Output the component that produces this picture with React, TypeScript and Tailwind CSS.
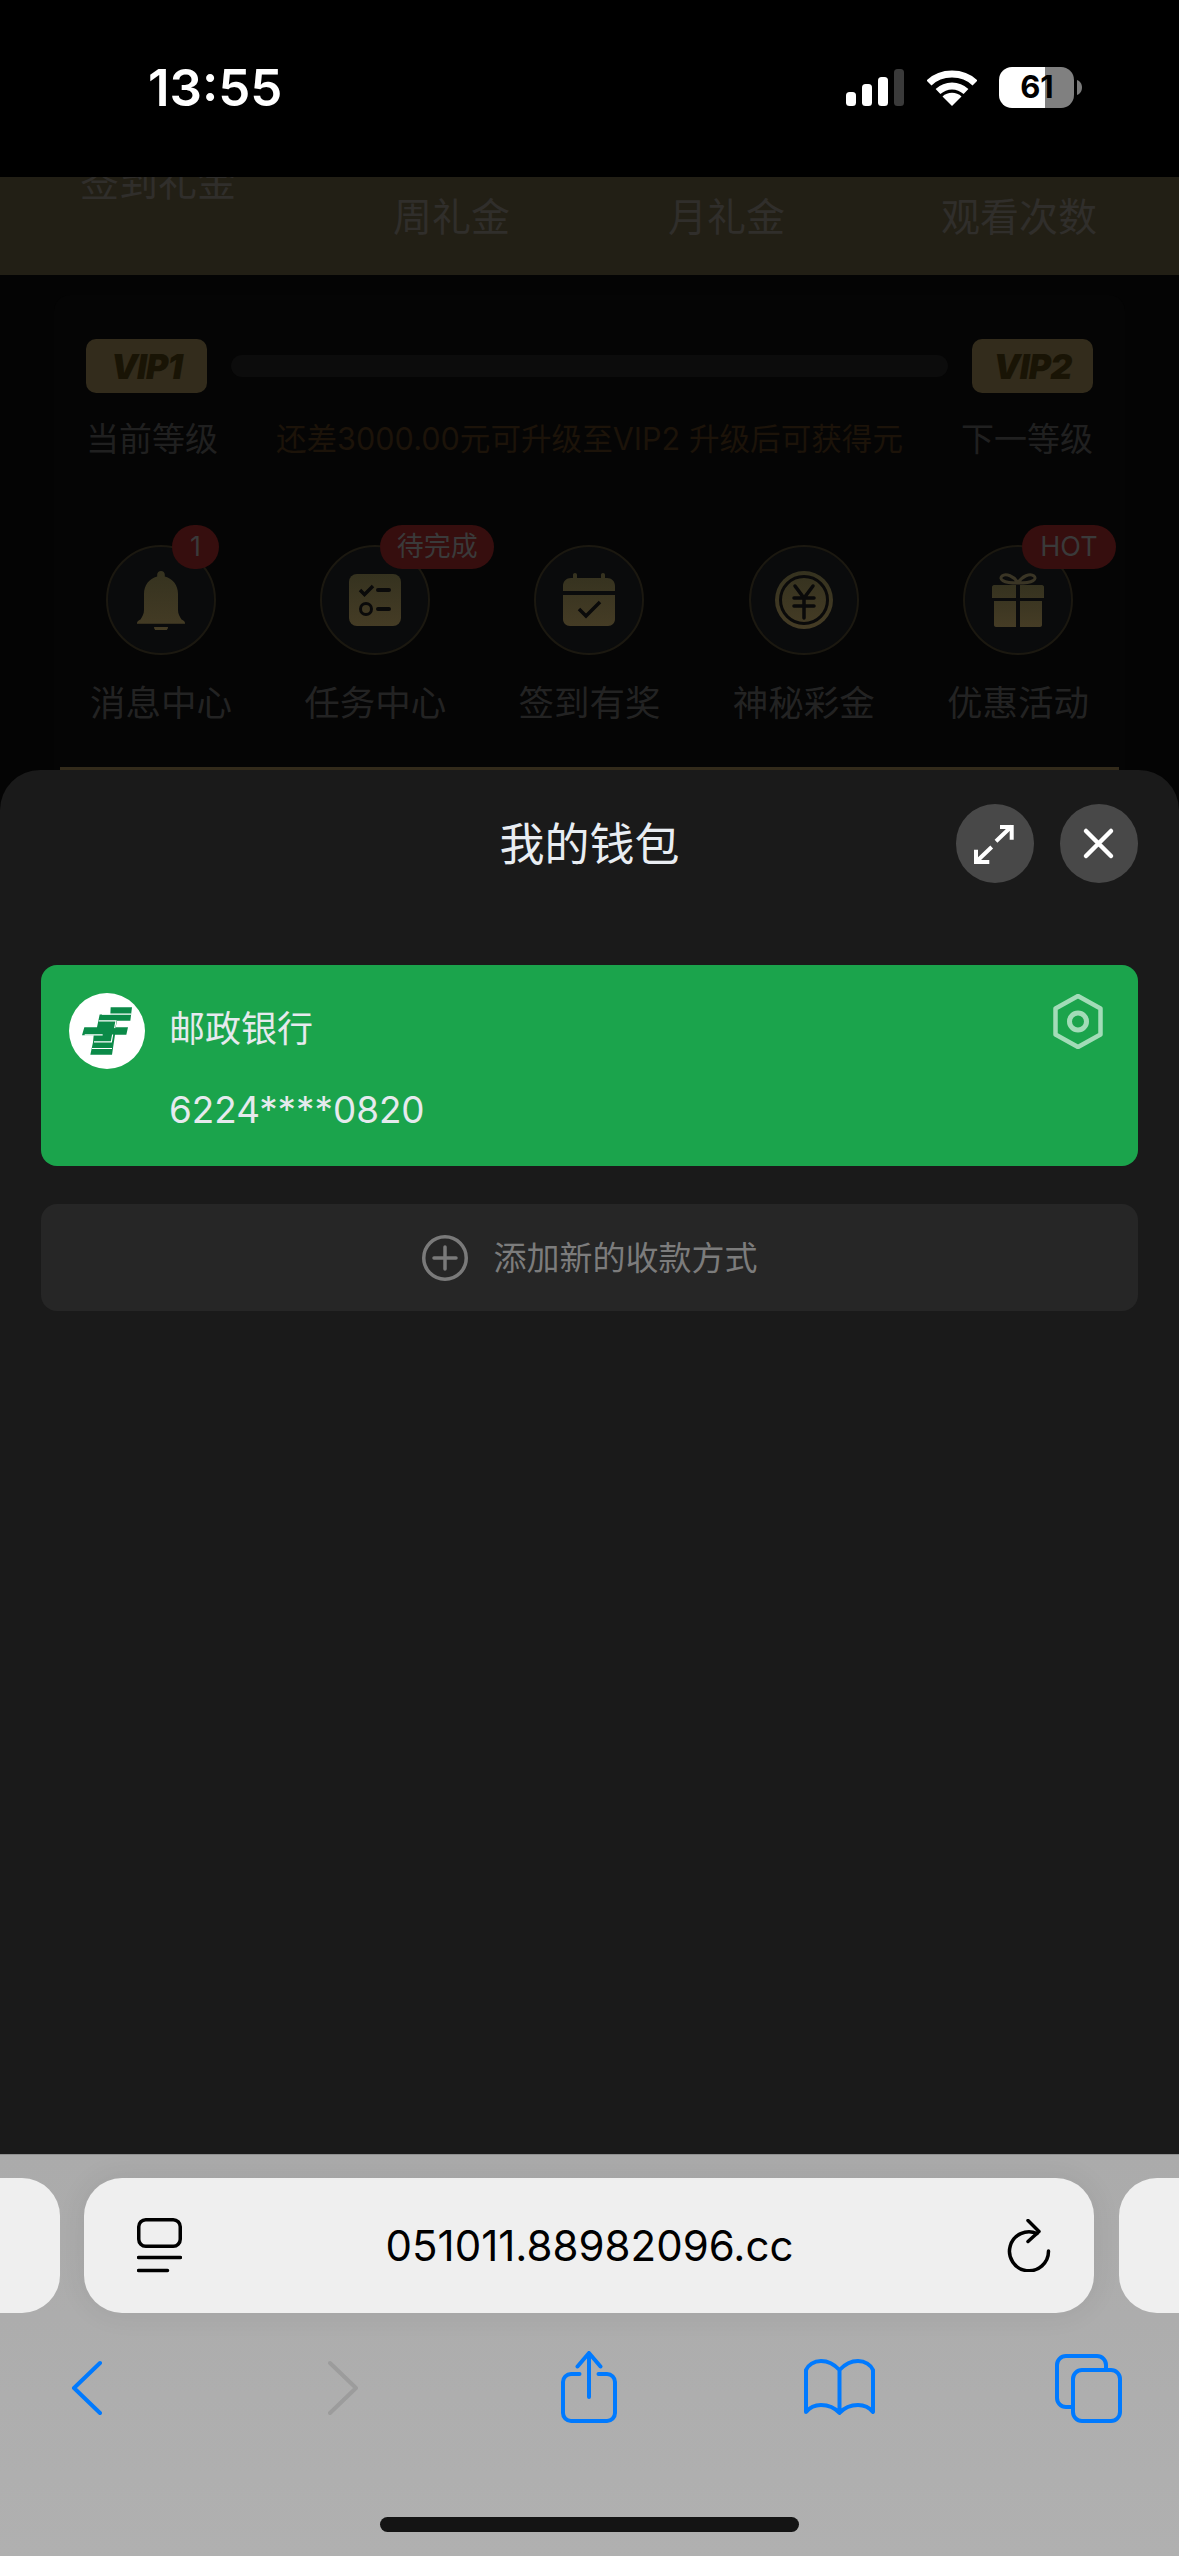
import type { ReactNode } from "react";

const tabs = [
  { label: "周礼金", cls: "ml-[157px] mt-[15px]" },
  { label: "月礼金", cls: "ml-[158px] mt-[15px]" },
  { label: "观看次数", cls: "ml-[156px] mt-[15px]" },
];

function GoldDefs({ id }: { id: string }) {
  return (
    <defs>
      <linearGradient id={id} x1="0" y1="0" x2="0" y2="1">
        <stop offset="0" stopColor="#35321f" />
        <stop offset="1" stopColor="#453c25" />
      </linearGradient>
    </defs>
  );
}

function BellIcon() {
  return (
    <svg width="60" height="60" viewBox="0 0 60 60">
      <GoldDefs id="g-bell" />
      <path
        fill="url(#g-bell)"
        d="M30 1c2.200 0 3.800 1.600 3.800 3.800v1.600C42 8.800 47 15 47 24v16c0 3.800 1.600 6.500 3.500 9.600 1 .8 3.500 1.400 3.500 3.400v.8H6V53c0-2 2.500-2.600 3.500-3.400C11.400 46.500 13 43.800 13 40V24c0-9 5-15.200 13.200-17.600V4.800C26.200 2.600 27.800 1 30 1zM23 57h14c0 3-3 5-7 5s-7-2-7-5z"
      />
    </svg>
  );
}

function TaskIcon() {
  return (
    <svg width="60" height="60" viewBox="0 0 60 60">
      <GoldDefs id="g-task" />
      <rect x="4" y="4" width="52" height="52" rx="8" fill="url(#g-task)" />
      <path d="M15 20l4.500 4.500L28 16" fill="none" stroke="#0a0a0a" strokeWidth="3.500" />
      <path d="M33 20h11M33 39h11" fill="none" stroke="#0a0a0a" strokeWidth="4" strokeLinecap="round" />
      <circle cx="21" cy="39" r="5.500" fill="none" stroke="#0a0a0a" strokeWidth="3" />
    </svg>
  );
}

function CalendarIcon() {
  return (
    <svg width="60" height="60" viewBox="0 0 60 60">
      <GoldDefs id="g-cal" />
      <path
        fill="url(#g-cal)"
        d="M16 3c1.200 0 2 .8 2 2v3h24V5c0-1.200.8-2 2-2s2 .8 2 2v3h2c4.500 0 8 3 8 8v5H4v-5c0-5 3.500-8 8-8h2V5c0-1.200.8-2 2-2zM4 25h52v24c0 4-3 7-7 7H11c-4 0-7-3-7-7z"
      />
      <path d="M20 39l7 7 14-14" fill="none" stroke="#0a0a0a" strokeWidth="3.500" />
    </svg>
  );
}

function CoinIcon() {
  return (
    <svg width="60" height="60" viewBox="0 0 60 60">
      <GoldDefs id="g-coin" />
      <circle cx="30" cy="30" r="29" fill="url(#g-coin)" />
      <circle cx="30" cy="30" r="23.500" fill="none" stroke="#0a0a0a" strokeWidth="3" />
      <path
        d="M21 16l9 12 9-12M20 28h20M20 36h20M30 28v20"
        fill="none"
        stroke="#0a0a0a"
        strokeWidth="3.500"
        strokeLinecap="round"
      />
    </svg>
  );
}

function GiftIcon() {
  return (
    <svg width="60" height="60" viewBox="0 0 60 60">
      <GoldDefs id="g-gift" />
      <path d="M30 13C26 6 18 3 14 6c-3 3 0 7 16 7zM30 13c4-7 12-10 16-7 3 3 0 7-16 7z" fill="none" stroke="#3a3525" strokeWidth="3" />
      <path
        fill="url(#g-gift)"
        d="M6 15h22v13H4V17c0-1 1-2 2-2zM32 15h22c1 0 2 1 2 2v11H32zM6 31h22v26H8c-1 0-2-1-2-2zM32 31h22v24c0 1-1 2-2 2H32z"
      />
    </svg>
  );
}

const menu: { label: string; icon: ReactNode; badge?: string; badgeCls?: string }[] = [
  { label: "消息中心", icon: <BellIcon />, badge: "1", badgeCls: "left-[64px] w-[47px]" },
  { label: "任务中心", icon: <TaskIcon />, badge: "待完成", badgeCls: "left-[58px] w-[114px]" },
  { label: "签到有奖", icon: <CalendarIcon /> },
  { label: "神秘彩金", icon: <CoinIcon /> },
  { label: "优惠活动", icon: <GiftIcon />, badge: "HOT", badgeCls: "left-[57px] w-[94px]" },
];

function PostLogo() {
  return (
    <svg width="50" height="48" viewBox="0 0 150 143">
      <path
        fill="#0b8a48"
        d="M86 0h64l-5 41h-40l-4 19h37l-5 23h-34l-9 60H25l8-38 2-21H0l7-24h38l8-38h32z"
      />
      <path
        d="M60 21h88M50 41h52l-4 22M8 83h54M36 104h52l4-22M30 124h60"
        fill="none"
        stroke="#ffffff"
        strokeWidth="3.500"
      />
    </svg>
  );
}

export default function App() {
  return (
    <div className="flex h-[2556px] w-[1179px] flex-col overflow-hidden bg-[#040404] font-['Inter','Noto_Sans_CJK_SC',sans-serif]">
      {/* status bar */}
      <div className="flex h-[177px] shrink-0 items-start bg-black text-white">
        <div className="ml-[148px] mt-[58px] text-[51px] font-semibold leading-[60px]">13:55</div>
        <svg className="ml-[564px] mt-[69px]" width="58" height="37" viewBox="0 0 58 37">
          <rect x="0" y="23" width="10" height="14" rx="3.500" fill="#fff" />
          <rect x="16" y="15" width="10" height="22" rx="3.500" fill="#fff" />
          <rect x="32" y="8" width="10" height="29" rx="3.500" fill="#fff" />
          <rect x="48" y="0" width="10" height="37" rx="3.500" fill="#3a3a3a" />
        </svg>
        <svg className="ml-[23px] mt-[69px]" width="50" height="37" viewBox="0 0 50 37">
          <path d="M2 14C14 2 36 2 48 14" fill="none" stroke="#fff" strokeWidth="7" />
          <path d="M11 22.500C19 15 31 15 39 22.500" fill="none" stroke="#fff" strokeWidth="7" />
          <path d="M25 37l-9.500-9.500c5-5 14-5 19 0z" fill="#fff" />
        </svg>
        <div className="ml-[22px] mt-[67px] flex h-[41px] w-[75px] items-center justify-center rounded-[13px] bg-[linear-gradient(90deg,#ffffff_61%,#808080_61%)] text-[31px] font-bold text-black">
          61
        </div>
        <svg className="ml-[3px] mt-[80px]" width="5" height="15" viewBox="0 0 5 15">
          <path d="M0 0c3 1 5 4 5 7.500S3 14 0 15z" fill="#7a7a7a" />
        </svg>
      </div>

      {/* dimmed page behind the sheet */}
      <div className="h-[593px] shrink-0 overflow-hidden">
        <div className="flex h-[98px] items-start overflow-hidden bg-[#221f15] text-[39px] leading-[50px] text-[#302e2b]">
          <div className="ml-[80px] mt-[-20px]">签到礼金</div>
          {tabs.map((t) => (
            <div key={t.label} className={t.cls}>
              {t.label}
            </div>
          ))}
        </div>

        <div className="mx-[54px] mt-[20px] h-[475px] rounded-t-[16px] bg-[#050505] pt-[44px]">
          <div className="flex items-center px-[32px]">
            <div className="flex h-[54px] w-[121px] items-center justify-center rounded-[10px] bg-[#332c1c] text-[34px] font-black italic tracking-tight text-[#191405]">
              VIP1
            </div>
            <div className="mx-[24px] h-[22px] flex-1 rounded-full bg-[#0c0c0c]" />
            <div className="flex h-[54px] w-[121px] items-center justify-center rounded-[10px] bg-[#332c1c] text-[34px] font-black italic tracking-tight text-[#191405]">
              VIP2
            </div>
          </div>
          <div className="mt-[23px] flex items-center justify-between px-[32px] text-[33px] leading-[46px] text-[#202020]">
            <span>当前等级</span>
            <span className="text-[30.600px] text-[#1c1309]">还差3000.00元可升级至VIP2 升级后可获得元</span>
            <span>下一等级</span>
          </div>

          <div className="mt-[83px] grid grid-cols-5">
            {menu.map((m) => (
              <div key={m.label} className="flex flex-col items-center">
                <div className="relative flex h-[110px] w-[110px] items-center justify-center rounded-full border-[2px] border-[#1b1810] bg-[#0a0b0c]">
                  {m.icon}
                  {m.badge && (
                    <div
                      className={`absolute top-[-22px] flex h-[44px] items-center justify-center rounded-full bg-[#360e0e] text-[27px] text-[#3a3a3a] ${m.badgeCls}`}
                    >
                      {m.badge}
                    </div>
                  )}
                </div>
                <div className="mt-[24px] text-[35.500px] leading-[50px] text-[#232323]">{m.label}</div>
              </div>
            ))}
          </div>
        </div>
        <div className="mx-[60px] mt-[-3px] h-[3px] bg-[#332b1b]" />
      </div>

      {/* wallet sheet */}
      <div className="flex h-[1384px] shrink-0 flex-col rounded-t-[40px] bg-[#1a1a1a] px-[41px]">
        <div className="grid grid-cols-[1fr_auto_1fr] items-center pt-[33px]">
          <div />
          <div className="pt-[2px] text-[45px] leading-[79px] text-[#e9edf2]">我的钱包</div>
          <div className="flex justify-end gap-[26px]">
            <button className="h-[79px] w-[78px] rounded-full bg-[#484848]">
              <svg width="78" height="79" viewBox="0 0 78 79">
                <path
                  d="M40 37.300L55.700 22.300M44 23h11.700v12.700M35.700 43L20 58M20 45.700V58h13.300"
                  fill="none"
                  stroke="#fff"
                  strokeWidth="4"
                />
              </svg>
            </button>
            <button className="h-[79px] w-[78px] rounded-full bg-[#484848]">
              <svg width="78" height="79" viewBox="0 0 78 79">
                <path d="M26 27l25 25M51 27L26 52" fill="none" stroke="#fff" strokeWidth="4.500" strokeLinecap="round" />
              </svg>
            </button>
          </div>
        </div>

        <div className="mt-[81px] flex h-[201px] rounded-[16px] bg-[#1ba44c] pl-[28px] pr-[35px] pt-[28px]">
          <div className="flex h-[76px] w-[76px] shrink-0 items-center justify-center rounded-full bg-white">
            <PostLogo />
          </div>
          <div className="ml-[24px] text-[#e6eaee]">
            <div className="mt-[11px] text-[36px] leading-[50px]">邮政银行</div>
            <div className="mt-[31px] text-[36.800px] leading-[50px]">6224****0820</div>
          </div>
          <svg className="ml-auto mt-[1px]" width="50" height="55" viewBox="0 0 50 55">
            <path d="M25 2l22.500 12.500v26L25 53 2.500 40.500v-26z" fill="none" stroke="#a3dcb8" strokeWidth="4.500" strokeLinejoin="round" />
            <circle cx="25" cy="27.500" r="8.500" fill="none" stroke="#a3dcb8" strokeWidth="5" />
          </svg>
        </div>

        <div className="mt-[38px] flex h-[107px] items-center justify-center gap-[26px] rounded-[16px] bg-[#262626]">
          <svg width="46" height="46" viewBox="0 0 46 46">
            <circle cx="23" cy="23" r="21.250" fill="none" stroke="#7a7a7a" strokeWidth="3.500" />
            <path d="M23 12v22M12 23h22" fill="none" stroke="#7a7a7a" strokeWidth="3.500" strokeLinecap="round" />
          </svg>
          <span className="text-[33px] leading-[46px] text-[#7c7c7c]">添加新的收款方式</span>
        </div>
      </div>

      {/* safari toolbar */}
      <div className="flex h-[402px] shrink-0 flex-col border-t border-[#8f8f8f] bg-[linear-gradient(180deg,#ababab,#b0b0b0)]">
        <div className="mt-[23px] flex h-[135px] gap-[24px]">
          <div className="w-[60px] rounded-r-[38px] bg-[#efefef]" />
          <div className="flex w-[1010px] items-center rounded-[38px] bg-[#efefef] pl-[53px] pr-[43px] shadow-[0_0_30px_rgba(0,0,0,0.07)]">
            <svg width="45" height="56" viewBox="0 0 45 56">
              <rect x="1.750" y="1.750" width="41.500" height="26.500" rx="7" fill="none" stroke="#000" strokeWidth="3.500" />
              <path d="M1.500 39.500h42M1.500 52.500h29" fill="none" stroke="#000" strokeWidth="3.500" strokeLinecap="round" />
            </svg>
            <div className="flex-1 pr-[10px] text-center text-[42px] text-black">051011.88982096.cc</div>
            <svg width="44" height="53" viewBox="0 0 44 53">
              <path d="M30 14.500A19.500 19.500 0 1 0 41.500 32" fill="none" stroke="#000" strokeWidth="3.500" strokeLinecap="round" />
              <path d="M21 1.500l11 11-11 10" fill="none" stroke="#000" strokeWidth="3.500" strokeLinecap="round" strokeLinejoin="round" />
            </svg>
          </div>
          <div className="ml-[1px] flex-1 rounded-l-[38px] bg-[#efefef]" />
        </div>

        <div className="mt-[38px] flex h-[72px] items-start">
          <svg className="ml-[71px]" width="31" height="72" viewBox="0 0 31 72">
            <path d="M29 12L3 37l26 25" fill="none" stroke="#007aff" strokeWidth="4" strokeLinecap="round" strokeLinejoin="round" />
          </svg>
          <svg className="ml-[226px]" width="31" height="72" viewBox="0 0 31 72">
            <path d="M2 12l26 25L2 62" fill="none" stroke="#9c9c9c" strokeWidth="4" strokeLinecap="round" strokeLinejoin="round" />
          </svg>
          <svg className="ml-[202px]" width="56" height="72" viewBox="0 0 56 72">
            <path
              d="M18.500 23H10a8 8 0 0 0-8 8v31a8 8 0 0 0 8 8h36a8 8 0 0 0 8-8V31a8 8 0 0 0-8-8h-8.500M28 46V3M16.500 15.500L28 2l11.500 13.500"
              fill="none"
              stroke="#007aff"
              strokeWidth="4"
              strokeLinecap="round"
              strokeLinejoin="round"
            />
          </svg>
          <svg className="ml-[187px]" width="71" height="72" viewBox="0 0 71 72">
            <path
              d="M35.500 19V62M35.500 19C30 13 24 10 17 10 10 10 4 14 2 19V61c4-5 9-7 15-7 7 0 14 3 18.500 8C40 57 47 54 54 54c6 0 11 2 15 7V19c-2-5-8-9-15-9-7 0-13 3-18.500 9z"
              fill="none"
              stroke="#007aff"
              strokeWidth="4"
              strokeLinejoin="round"
            />
          </svg>
          <svg className="ml-[180px]" width="67" height="72" viewBox="0 0 67 72">
            <path d="M51 17v-3a9 9 0 0 0-9-9H11a9 9 0 0 0-9 9v33a9 9 0 0 0 9 9h5" fill="none" stroke="#007aff" strokeWidth="4" />
            <rect x="18" y="19" width="47" height="51" rx="9" fill="none" stroke="#007aff" strokeWidth="4" />
          </svg>
        </div>

        <div className="mx-auto mt-[94px] h-[15px] w-[419px] rounded-full bg-[#141414]" />
      </div>
    </div>
  );
}
